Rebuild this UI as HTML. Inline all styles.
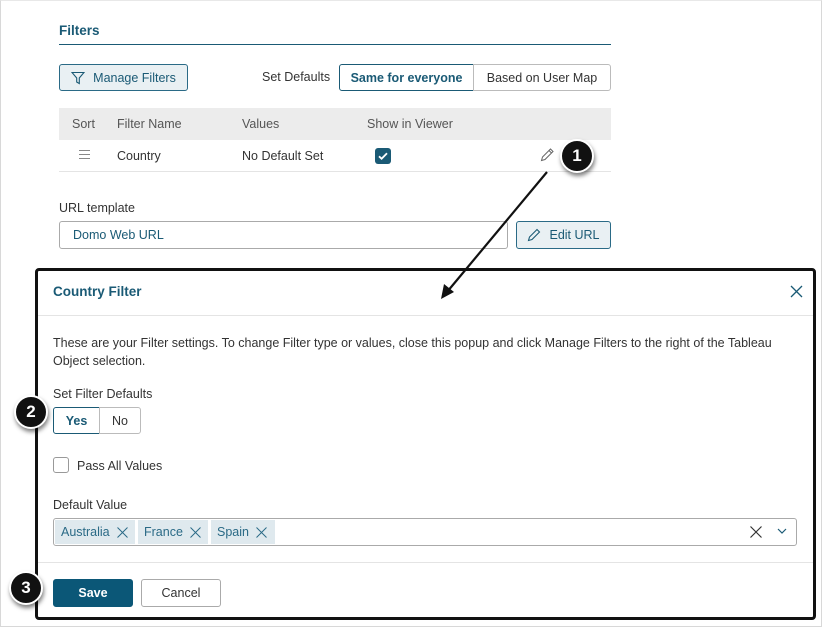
<!DOCTYPE html>
<html><head><style>
*{box-sizing:border-box;margin:0;padding:0}
body{width:823px;height:628px;background:#fff;font-family:"Liberation Sans",sans-serif;font-size:12.5px;color:#333;position:relative;overflow:hidden}
.a{position:absolute}
.frame{left:0;top:0;width:822px;height:627px;border:1px solid #d8d8d8;border-top-color:#e8e8e8}
.btn{position:absolute;border:1px solid #999;border-radius:3px;display:flex;align-items:center;justify-content:center;background:#fff}
.teal{color:#1a5a75}
.badge{position:absolute;width:34px;height:34px;border-radius:50%;background:#111;color:#fff;font-weight:bold;font-size:17px;display:flex;align-items:center;justify-content:center;border:2px solid #fff;box-shadow:1px 3px 4px rgba(0,0,0,.5)}
.tag{position:absolute;top:520px;height:24px;background:#dfe9ee;color:#2a6a86;display:flex;align-items:center;padding-left:6px;font-size:12.5px}
</style></head><body>
<div class="a frame"></div>
<div class="a teal" style="left:59px;top:23px;font-weight:bold;font-size:13.5px">Filters</div>
<div class="a" style="left:59px;top:44px;width:552px;height:1px;background:#1a5a75"></div>
<div class="btn" style="left:59px;top:64px;width:129px;height:27px;border-color:#2a6a86;background:#e9f0f3;color:#1a5a75">
<svg width="14" height="14" viewBox="0 0 14 14" style="margin-right:8px"><path d="M1 1.5h12L8.3 7v5.5L5.7 11V7z" fill="none" stroke="#1a5a75" stroke-width="1.1"/></svg>Manage Filters</div>
<div class="a" style="left:262px;top:70px">Set Defaults</div>
<div class="btn" style="left:339px;top:64px;width:135px;height:27px;border-color:#1a5a75;font-weight:bold;color:#1a5a75;border-radius:3px 0 0 3px">Same for everyone</div>
<div class="btn" style="left:473px;top:64px;width:138px;height:27px;border-color:#bbb;border-radius:0 3px 3px 0;color:#333">Based on User Map</div>
<div class="a" style="left:59px;top:108px;width:552px;height:32px;background:#ececec"></div>
<div class="a" style="left:72px;top:117px;color:#555">Sort</div>
<div class="a" style="left:117px;top:117px;color:#555">Filter Name</div>
<div class="a" style="left:242px;top:117px;color:#555">Values</div>
<div class="a" style="left:367px;top:117px;color:#555">Show in Viewer</div>
<div class="a" style="left:79px;top:150px;width:11px;height:9px;border-top:1px solid #888;border-bottom:1px solid #888"><div style="margin-top:3px;height:1px;background:#888"></div></div>
<div class="a" style="left:117px;top:149px">Country</div>
<div class="a" style="left:242px;top:149px">No Default Set</div>
<div class="a" style="left:375px;top:148px;width:16px;height:16px;background:#1a5a75;border-radius:3px"><svg width="16" height="16"><path d="M4 8.3l2.6 2.4L12 5.3" stroke="#fff" stroke-width="1.8" fill="none"/></svg></div>
<svg class="a" style="left:539px;top:147px" width="16" height="16"><path d="M2.5 13.5l1-3.5 8-8 2.5 2.5-8 8z M10 3.5l2.5 2.5" stroke="#666" fill="none" stroke-width="1"/></svg>
<div class="a" style="left:59px;top:171px;width:552px;height:1px;background:#e4e4e4"></div>
<div class="a" style="left:59px;top:201px">URL template</div>
<div class="btn" style="left:59px;top:221px;width:449px;height:28px;border-color:#aaa;justify-content:flex-start;padding-left:13px;color:#1a5a75">Domo Web URL</div>
<div class="btn" style="left:516px;top:221px;width:95px;height:28px;border-color:#2a6a86;background:#e9f0f3;color:#1a5a75">
<svg width="14" height="14" viewBox="0 0 14 14" style="margin-right:8px"><path d="M1.5 12.5l1-3.5 7.5-7.5 2.5 2.5-7.5 7.5z" fill="none" stroke="#1a5a75" stroke-width="1.1"/></svg>Edit URL</div>

<div class="a" style="left:35px;top:268px;width:781px;height:352px;border:3px solid #111;border-radius:4px;background:#fff"></div>
<div class="a teal" style="left:53px;top:284px;font-weight:bold;font-size:13.5px">Country Filter</div>
<svg class="a" style="left:790px;top:285px" width="13" height="13"><path d="M1 1l11 11M12 1L1 12" stroke="#1a5a75" stroke-width="1.3"/></svg>
<div class="a" style="left:38px;top:315px;width:775px;height:1px;background:#e4e4e4"></div>
<div class="a" style="left:53px;top:334px;width:745px;line-height:18px">These are your Filter settings. To change Filter type or values, close this popup and click Manage Filters to the right of the Tableau Object selection.</div>
<div class="a" style="left:53px;top:387px">Set Filter Defaults</div>
<div class="btn" style="left:53px;top:407px;width:47px;height:27px;border-color:#1a5a75;color:#1a5a75;font-weight:bold;border-radius:3px 0 0 3px">Yes</div>
<div class="btn" style="left:99px;top:407px;width:42px;height:27px;border-color:#bbb;border-radius:0 3px 3px 0">No</div>
<div class="a" style="left:53px;top:457px;width:16px;height:16px;border:1px solid #999;border-radius:3px"></div>
<div class="a" style="left:77px;top:459px">Pass All Values</div>
<div class="a" style="left:53px;top:498px">Default Value</div>
<div class="a" style="left:53px;top:518px;width:744px;height:28px;border:1px solid #aaa;border-radius:3px"></div>
<div class="tag" style="left:55px;width:80px">Australia<svg style="margin-left:7px" width="11" height="11"><path d="M.5.5l10 10M10.5.5l-10 10" stroke="#2a6a86"/></svg></div>
<div class="tag" style="left:138px;width:70px">France<svg style="margin-left:7px" width="11" height="11"><path d="M.5.5l10 10M10.5.5l-10 10" stroke="#2a6a86"/></svg></div>
<div class="tag" style="left:211px;width:64px">Spain<svg style="margin-left:7px" width="11" height="11"><path d="M.5.5l10 10M10.5.5l-10 10" stroke="#2a6a86"/></svg></div>
<svg class="a" style="left:750px;top:526px" width="12" height="12"><path d="M.5.5l11 11M11.5.5l-11 11" stroke="#333" stroke-width="1.2"/></svg>
<svg class="a" style="left:777px;top:528px" width="10" height="7"><path d="M1 1l4 4 4-4" stroke="#1a5a75" fill="none" stroke-width="1.2"/></svg>
<div class="a" style="left:38px;top:562px;width:775px;height:1px;background:#e4e4e4"></div>
<div class="btn" style="left:53px;top:579px;width:80px;height:28px;background:#0b5777;border-color:#0b5777;color:#fff;font-weight:bold">Save</div>
<div class="btn" style="left:141px;top:579px;width:80px;height:28px;border-color:#aaa">Cancel</div>

<svg class="a" style="left:0;top:0" width="823" height="628"><path d="M547 172L447 292" stroke="#111" stroke-width="2.2"/><path d="M441 299l3-15 10 8z" fill="#111"/></svg>
<div class="badge" style="left:560px;top:139px">1</div>
<div class="badge" style="left:14px;top:395px">2</div>
<div class="badge" style="left:9px;top:571px">3</div>
</body></html>
